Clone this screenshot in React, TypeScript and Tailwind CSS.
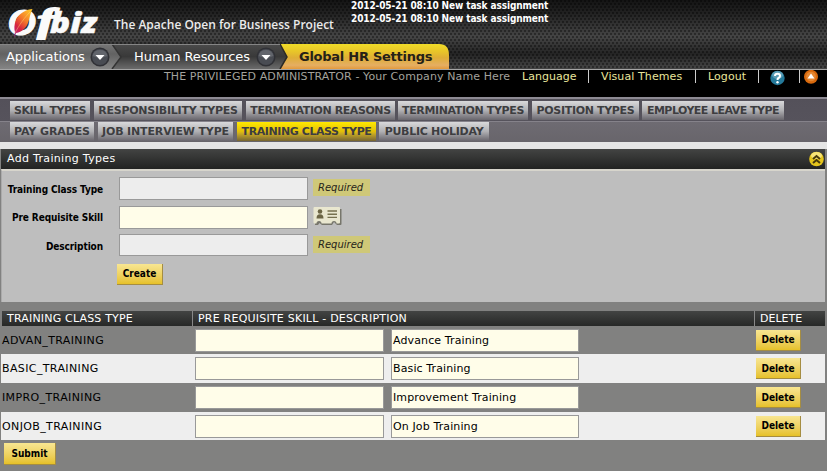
import React from "react";

const verdana = "font-['DejaVu_Sans',Verdana,sans-serif]";
const tahoma = "font-['DejaVu_Sans_Condensed','DejaVu_Sans',Tahoma,sans-serif]";

function Logo() {
  return (
    <svg width="100" height="44" viewBox="0 0 100 44" className="block shrink-0 overflow-visible">
      <defs>
        <linearGradient id="feather" x1="0.8" y1="0" x2="0.2" y2="1">
          <stop offset="0" stopColor="#ffc52a" />
          <stop offset="0.4" stopColor="#f4772a" />
          <stop offset="0.7" stopColor="#d8263e" />
          <stop offset="1" stopColor="#b01a86" />
        </linearGradient>
      </defs>
      <g fill="#fafafa" stroke="#fafafa" fontFamily="Lato, sans-serif" fontWeight="900" fontStyle="italic">
        <text x="8" y="35" fontSize="35" textLength="28" lengthAdjust="spacingAndGlyphs" strokeWidth="1">O</text>
        <text x="37.500" y="31.500" fontSize="34" fontFamily="Liberation Serif, serif" fontWeight="700" textLength="17" lengthAdjust="spacingAndGlyphs" strokeWidth="1.800">f</text>
        <text x="50" y="33" fontSize="29" fontFamily="Open Sans, sans-serif" fontWeight="800" textLength="47" lengthAdjust="spacingAndGlyphs" strokeWidth="0.500">biz</text>
      </g>
      <path d="M32.500 9C27 9 19 13 16 20C14 25 14 29 15 32L14 38L16 33C22 32 26 28 28 23C30 18 30 13 32.500 9Z" fill="url(#feather)" />
      <path d="M30 12C25 17 19 25 15 33" fill="none" stroke="#ffe27a" strokeWidth="0.6" opacity="0.7" />
    </svg>
  );
}

function Caret() {
  return (
    <svg width="20" height="20" viewBox="0 0 20 20" className="block shrink-0">
      <circle cx="10" cy="10" r="9.500" fill="#303136" />
      <circle cx="10" cy="10" r="8" fill="#494c53" />
      <path d="M2.500 9A7.700 7.700 0 0 1 17.500 9Q10 12 2.500 9Z" fill="#62656c" />
      <path d="M5.500 8H14.500L10 13Z" fill="#fff" />
    </svg>
  );
}

function Breadcrumb() {
  return (
    <div className={`relative flex h-[25px] w-[449px] items-center text-white ${verdana}`}>
      <svg width="449" height="25" viewBox="0 0 449 25" className="absolute inset-0">
        <defs>
          <linearGradient id="grey1" x1="0" y1="0" x2="0" y2="1">
            <stop offset="0" stopColor="#777" />
            <stop offset="0.4" stopColor="#626262" />
            <stop offset="1" stopColor="#858585" />
          </linearGradient>
          <linearGradient id="grey2" x1="0" y1="0" x2="0" y2="1">
            <stop offset="0" stopColor="#4b4b4b" />
            <stop offset="0.5" stopColor="#393939" />
            <stop offset="1" stopColor="#6b6b6b" />
          </linearGradient>
          <linearGradient id="gold" x1="0" y1="0" x2="0" y2="1">
            <stop offset="0" stopColor="#f0dc28" />
            <stop offset="0.3" stopColor="#e8c529" />
            <stop offset="0.55" stopColor="#dfae35" />
            <stop offset="0.85" stopColor="#e5ae63" />
            <stop offset="1" stopColor="#e49a3b" />
          </linearGradient>
        </defs>
        <path d="M280 0H439Q449 0 449 11V25H280L287 13Z" fill="url(#gold)" />
        <path d="M112 0H280L287 13L280 25H112Z" fill="url(#grey2)" />
        <path d="M280 0L287 13L280 25" fill="none" stroke="#2c2a25" strokeWidth="1.500" />
        <path d="M0 0H112L121 13L112 25H0Z" fill="url(#grey1)" />
        <path d="M112 0L121 13L112 25" fill="none" stroke="#333" strokeWidth="1.500" />
        <path d="M0 0.500H280" stroke="#858585" strokeWidth="1" />
      </svg>
      <div className="relative flex h-full items-center">
        <span className="mt-px w-[84px] pl-[6px] whitespace-nowrap text-[13px] tracking-[-0.05px]">Applications</span>
        <span className="ml-[6px] w-[44px]"><Caret /></span>
        <span className="mt-px w-[122px] whitespace-nowrap text-[13px] tracking-[-0.1px]">Human Resources</span>
        <span className="w-[43px]"><Caret /></span>
        <span className="mt-px whitespace-nowrap text-[13px] font-bold tracking-[-0.26px] text-[#252117]">Global HR Settings</span>
      </div>
    </div>
  );
}

function UserBar() {
  return (
    <div className={`flex h-[28px] items-start border-t border-[#a5a5a5] bg-black text-[11px] leading-[14px] text-[#e9e59c] ${verdana}`}>
      <span className="ml-[164px] w-[358px] whitespace-nowrap tracking-[0.1px] text-[#a3a29c]">
        THE PRIVILEGED ADMINISTRATOR - Your Company Name Here
      </span>
      <span className="h-[13px] w-[67px] border-r border-[#ccc] tracking-[0.05px]">Language</span>
      <span className="h-[13px] w-[107px] whitespace-nowrap border-r border-[#ccc] pl-[12px] tracking-[0.1px]">Visual Themes</span>
      <span className="h-[13px] w-[63px] border-r border-[#ccc] pl-[12px] tracking-[0.1px]">Logout</span>
      <span className="flex h-[13px] w-[41px] border-r border-[#ccc] pl-[11px]">
        <svg width="15" height="16" viewBox="0 0 15 16" className="block shrink-0">
          <circle cx="7.500" cy="8" r="7.200" fill="#24799a" />
          <ellipse cx="7.500" cy="5" rx="5.500" ry="4" fill="#5b9cb5" />
          <path d="M5 6Q5 3.800 7.500 3.800T10 6Q10 7.300 8.500 8Q7.500 8.500 7.500 10" fill="none" stroke="#fff" strokeWidth="2" />
          <circle cx="7.500" cy="12.200" r="1.200" fill="#fff" />
        </svg>
      </span>
      <svg width="14" height="14" viewBox="0 0 14 14" className="ml-[4px] block shrink-0">
        <circle cx="7" cy="6.800" r="7" fill="#d8690d" />
        <circle cx="7" cy="6.500" r="4.800" fill="#e48732" />
        <path d="M7 3.500L10.500 8.500H3.500Z" fill="#fff" />
      </svg>
    </div>
  );
}

type TabItem = { label: string; w: string; active?: boolean };
const firstTabs: TabItem[] = [
  { label: "SKILL TYPES", w: "w-[80px] tracking-[-0.5px]" },
  { label: "RESPONSIBILITY TYPES", w: "ml-[4px] w-[148px] tracking-[-0.25px]" },
  { label: "TERMINATION REASONS", w: "ml-[4px] w-[149px] tracking-[-0.42px]" },
  { label: "TERMINATION TYPES", w: "ml-[3px] w-[130px] tracking-[-0.38px]" },
  { label: "POSITION TYPES", w: "ml-[4px] w-[107px] tracking-[-0.33px]" },
  { label: "EMPLOYEE LEAVE TYPE", w: "ml-[3px] w-[142px] tracking-[-0.53px]" },
];
const secondTabs: TabItem[] = [
  { label: "PAY GRADES", w: "w-[84px] tracking-[-0.1px]" },
  { label: "JOB INTERVIEW TYPE", w: "ml-[4px] w-[135px] tracking-[-0.15px]" },
  { label: "TRAINING CLASS TYPE", w: "ml-[4px] w-[139px] tracking-[-0.42px]", active: true },
  { label: "PUBLIC HOLIDAY", w: "ml-[3px] w-[110px] tracking-[-0.28px]" },
];

function Tab({ label, w, active }: TabItem) {
  return (
    <span
      className={`flex h-full items-center justify-center whitespace-nowrap bg-linear-to-b ${w} ${
        active ? "from-[#ffe900] via-[#e2bf08] to-[#77652f]" : "from-[#d9d9db] via-[#b0b0b3] to-[#69666d]"
      }`}
    >
      {label}
    </span>
  );
}

function Tabs() {
  return (
    <div className={`h-[45px] text-[11px] leading-[15px] font-bold text-[#3d3d40] ${verdana}`}>
      <div className="flex h-[24px] border-t-2 border-[#8d8a93] bg-linear-to-b from-[#54515a] to-[#56535c] pt-[2px] pb-px pl-[10px]">
        {firstTabs.map((t) => <Tab key={t.label} {...t} />)}
      </div>
      <div className="flex h-[21px] border-t border-[#85828a] bg-linear-to-b from-[#6e6b72] to-[#68656b] pb-px pl-[10px]">
        {secondTabs.map((t) => <Tab key={t.label} {...t} />)}
      </div>
    </div>
  );
}

function GoldButton({ label, size }: { label: string; size: string }) {
  return (
    <button
      className={`flex items-center justify-center border-r border-b border-[#a58d42] bg-linear-to-b from-[#f8e691] to-[#e6c126] pt-px text-[10px] leading-[14px] font-bold text-black ${tahoma} ${size}`}
    >
      {label}
    </button>
  );
}

function Required() {
  return (
    <span className={`ml-[5px] flex h-[17px] w-[57px] items-center bg-[#cfc878] pl-[5px] text-[10px] italic text-[#26231a] ${verdana}`}>
      Required
    </span>
  );
}

function CardIcon() {
  return (
    <svg width="29" height="20" viewBox="0 0 29 20" className="ml-[5px] block shrink-0">
      <path d="M3 3H28.500V18Q28.500 19 27.500 19H24L21 16L19 19H9L6.500 17L5 19H2Z" fill="#77766b" />
      <path d="M1.500 1H26Q27 1 27 2V16.500Q27 17.500 26 17.500H23.500Q23.500 15 21 15T18.500 17.500H8.500Q8.500 15 6 15T3.500 17.500H1.500Q0.500 17.500 0.500 16.500V2Q0.500 1 1.500 1Z" fill="#e9e7cf" />
      <circle cx="7" cy="5.500" r="2.300" fill="#6b6544" />
      <path d="M3.500 12.500Q3.500 8.300 7 8.300T10.500 12.500Z" fill="#6b6544" />
      <path d="M14.500 5H24M14.500 8.200H24M14.500 11.400H24" stroke="#77724f" strokeWidth="1.400" />
    </svg>
  );
}

function Field({ label, cream, height, children }: { label: string; cream?: boolean; height: string; children: React.ReactNode }) {
  return (
    <div className="flex h-[28.500px] items-start">
      <span className={`w-[101px] whitespace-nowrap text-right text-[10px] leading-[14px] font-bold tracking-[-0.1px] text-black ${cream ? "mt-[5px]" : "mt-[6px]"} ${tahoma}`}>{label}</span>
      <span className={`ml-[16px] w-[189px] border border-[#999] ${height} ${cream ? "bg-[#fffde9]" : "bg-[#ededed]"}`} />
      {children}
    </div>
  );
}

function Panel() {
  return (
    <section className="border-t-[7px] border-[#e5e5e5] bg-[#818180]">
      <div className={`mr-[2px] ml-[1px] flex h-[20px] items-center justify-between bg-linear-to-b from-[#434443] to-[#222322] pl-[6px] text-[11px] tracking-[0.32px] text-white ${verdana}`}>
        <span>Add Training Types</span>
        <svg width="17" height="18" viewBox="0 0 17 18" className="block">
          <circle cx="8.500" cy="9" r="7.300" fill="#e5c51c" />
          <ellipse cx="8.500" cy="5.500" rx="5.500" ry="3.500" fill="#f7e478" />
          <path d="M5 9L8.500 6L12 9M5 13L8.500 10L12 13" fill="none" stroke="#46390b" strokeWidth="2" />
        </svg>
      </div>
      <div className="mr-[2px] ml-px h-[133px] border-t-2 border-l border-t-[#d7d5cc] border-l-[#aaa] bg-[#bebebe] pt-[6px]">
        <Field label="Training Class Type" height="h-[23px]"><span className="mt-[2px]"><Required /></span></Field>
        <Field label="Pre Requisite Skill" cream height="h-[23px]"><CardIcon /></Field>
        <Field label="Description" height="h-[22px]"><span className="mt-[2px]"><Required /></span></Field>
        <div className="ml-[115px]"><GoldButton label="Create" size="w-[46px] h-[21px] mt-[1px]" /></div>
      </div>
    </section>
  );
}

const rows = [
  { id: "ADVAN_TRAINING", description: "Advance Training", h: "h-[28px]" },
  { id: "BASIC_TRAINING", description: "Basic Training", h: "h-[29px]" },
  { id: "IMPRO_TRAINING", description: "Improvement Training", h: "h-[29px]" },
  { id: "ONJOB_TRAINING", description: "On Job Training", h: "h-[28px]" },
];

function TrainingTable() {
  return (
    <div className={`mr-[2px] ml-[1px] mt-[9px] text-[11px] leading-[15px] ${verdana}`}>
      <div className="ml-px flex h-[15px] items-center bg-linear-to-b from-[#434443] to-[#272827] text-white">
        <span className="w-[191px] whitespace-nowrap border-r border-[#888] pl-[5px] tracking-[0.18px]">TRAINING CLASS TYPE</span>
        <span className="w-[562px] whitespace-nowrap border-r border-[#888] pl-[5px] tracking-[0.22px]">PRE REQUISITE SKILL - DESCRIPTION</span>
        <span className="pl-[5px]">DELETE</span>
      </div>
      {rows.map((row, i) => (
        <div key={row.id} className={`flex items-center text-black ${row.h} ${i % 2 ? "bg-[#eeeeee]" : "bg-[#818180]"}`}>
          <span className="w-[194px] pl-px tracking-[0.38px]">{row.id}</span>
          <span className="h-[23px] w-[189px] border border-[#999] bg-[#fffde9]" />
          <span className="ml-[7px] flex h-[23px] w-[188px] items-center border border-[#999] bg-[#fffde9] pl-px tracking-[0.12px]">{row.description}</span>
          <span className="ml-[177px]"><GoldButton label="Delete" size="w-[45px] h-[21px]" /></span>
        </div>
      ))}
    </div>
  );
}

export default function App() {
  return (
    <div className="h-[471px] w-[827px] overflow-hidden bg-[#818180]">
      <header className="relative h-[69px] bg-[#202020] bg-[radial-gradient(circle_at_1px_1px,#0007_0.5px,transparent_1.400px),radial-gradient(circle_at_3px_4px,#0007_0.5px,transparent_1.400px),linear-gradient(#141414,#222_20%,#454545_53%,#242424_78%,#464646)] bg-[size:4px_6px,4px_6px,100%_100%]">
        <div className="flex h-[44px]">
          <Logo />
          <span className="mt-[15px] ml-[14px] w-[237px] whitespace-nowrap font-['Open_Sans','Noto_Sans',sans-serif] text-[12px] leading-[19px] font-semibold text-[#ececec]">
            The Apache Open for Business Project
          </span>
          <div className={`flex flex-col text-[10px] leading-[13px] font-bold tracking-[-0.11px] whitespace-nowrap text-white ${tahoma}`}>
            <span className="-mt-px">2012-05-21 08:10 New task assignment</span>
            <span>2012-05-21 08:10 New task assignment</span>
          </div>
        </div>
        <Breadcrumb />
      </header>
      <UserBar />
      <Tabs />
      <Panel />
      <TrainingTable />
      <GoldButton label="Submit" size="w-[52px] h-[22px] mt-[3px] ml-[4px]" />
    </div>
  );
}
